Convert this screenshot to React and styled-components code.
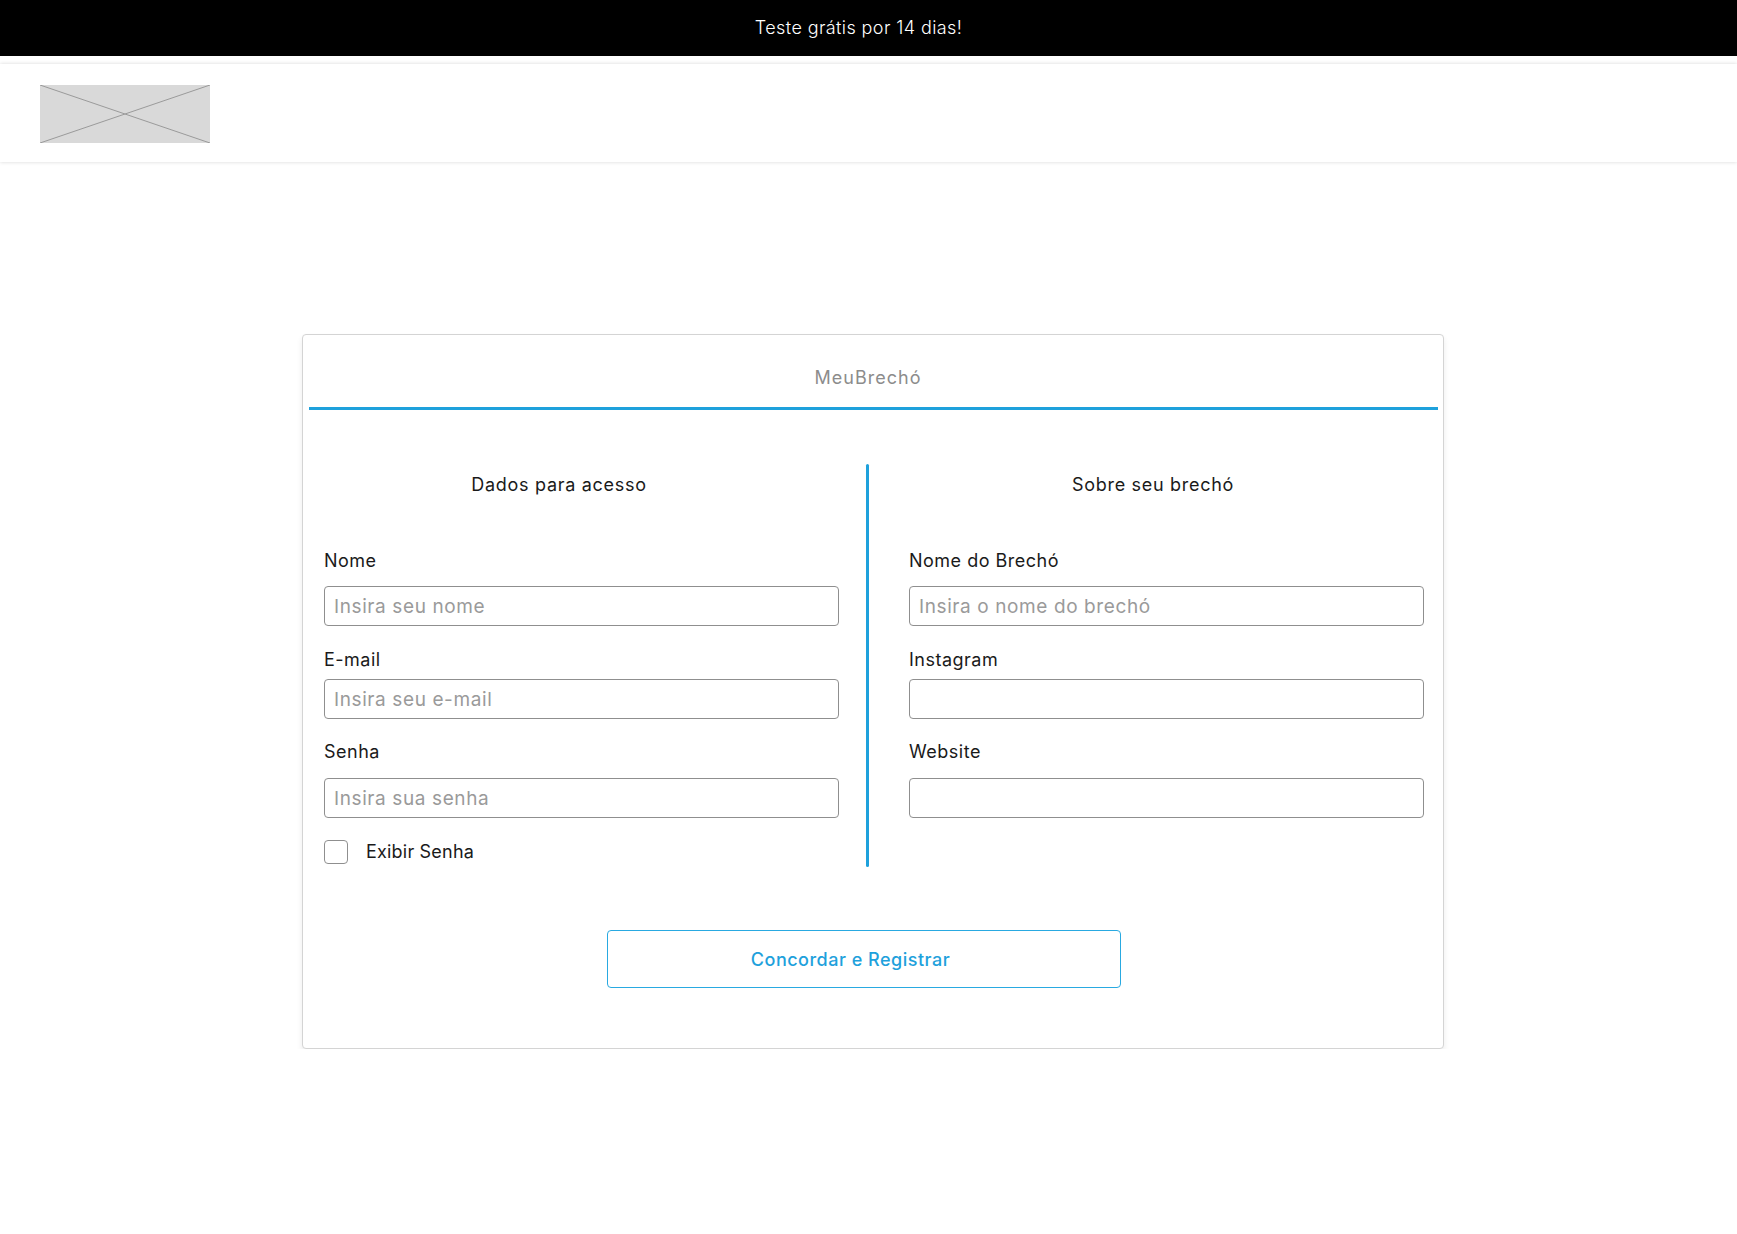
import styled, { createGlobalStyle } from "styled-components"

const GlobalStyle = createGlobalStyle`
  * { box-sizing: border-box; }
  body {
    margin: 0;
    background: #fff;
    font-family: Inter, "Open Sans", sans-serif;
    color: #1a1a1a;
  }
`;

const Field = ({ label, placeholder, type = "text", top, gap }) => (
  <FieldBox $top={top}>
    <Label $gap={gap}>{label}</Label>
    <Input type={type} placeholder={placeholder} />
  </FieldBox>
);

const App = () => {
  return (
    <>
      <GlobalStyle />
      <PromoBar>Teste grátis por 14 dias!</PromoBar>

      <Header>
        <LogoBox>
          <svg width="170" height="58" viewBox="0 0 170 58">
            <rect x="0" y="0" width="170" height="58" fill="#d9d9d9" />
            <line x1="0" y1="0" x2="170" y2="58" stroke="#9a9a9a" strokeWidth="1" />
            <line x1="0" y1="58" x2="170" y2="0" stroke="#9a9a9a" strokeWidth="1" />
          </svg>
        </LogoBox>
      </Header>

      <Main>
        <Card>
          <CardTitle>MeuBrechó</CardTitle>
          <TitleRule />

          <CardBody>
            <Column>
              <SectionTitle $shift={45}>Dados para acesso</SectionTitle>
              <Field label="Nome" placeholder="Insira seu nome" top={52} gap={13} />
              <Field label="E-mail" placeholder="Insira seu e-mail" top={22} gap={7} />
              <Field label="Senha" placeholder="Insira sua senha" type="password" top={21} gap={14} />
              <CheckRow>
                <CheckBox type="checkbox" />
                <span>Exibir Senha</span>
              </CheckRow>
            </Column>

            <Divider />

            <Column>
              <SectionTitle $shift={27}>Sobre seu brechó</SectionTitle>
              <Field label="Nome do Brechó" placeholder="Insira o nome do brechó" top={52} gap={13} />
              <Field label="Instagram" top={22} gap={7} />
              <Field label="Website" top={21} gap={14} />
            </Column>
          </CardBody>

          <Footer>
            <RegisterButton>Concordar e Registrar</RegisterButton>
          </Footer>
        </Card>
      </Main>
    </>
  );
};

export default App;

const PromoBar = styled.div`
  height: 56px;
  background: #000;
  color: #fff;
  display: flex;
  align-items: center;
  justify-content: center;
  font-size: 18px;
  font-weight: 300;
  letter-spacing: 0.4px;
  padding-right: 20px;
  padding-bottom: 2px;
`;

const Header = styled.header`
  margin-top: 8px;
  height: 98px;
  display: flex;
  align-items: center;
  padding-left: 40px;
  background: #fff;
  box-shadow: 0 0 4px rgba(0, 0, 0, 0.16);
`;

const LogoBox = styled.div`
  width: 170px;
  height: 58px;
  margin-top: 2px;
  svg { display: block; }
`;

const Main = styled.main`
  display: flex;
  justify-content: center;
  padding: 172px 0 0 9px;
`;

const Card = styled.section`
  width: 1142px;
  border: 1px solid #d4d4d4;
  border-radius: 4px;
  background: #fff;
  box-shadow: 0 4px 6px rgba(0, 0, 0, 0.08);
  display: flex;
  flex-direction: column;
`;

const CardTitle = styled.h1`
  margin: 0;
  padding-top: 31px;
  text-align: center;
  font-size: 18px;
  line-height: 24px;
  font-weight: 400;
  color: #8c8c8c;
  letter-spacing: 1px;
  padding-right: 10px;
`;

const TitleRule = styled.div`
  height: 3px;
  margin: 17px 5px 0 6px;
  background: #1ea1dc;
`;

const CardBody = styled.div`
  display: flex;
  padding: 54px 19px 0 21px;
`;

const Column = styled.div`
  width: 515px;
  display: flex;
  flex-direction: column;
  padding: 9px 0 3px;
`;

const SectionTitle = styled.h2`
  margin: 0;
  text-align: center;
  font-size: 18px;
  line-height: 24px;
  font-weight: 400;
  letter-spacing: 0.7px;
  color: #1a1a1a;
  padding-right: ${(p) => p.$shift}px;
`;

const Divider = styled.div`
  width: 3px;
  margin: 0 40px 0 27px;
  background: #1ea1dc;
  border-radius: 2px;
`;

const FieldBox = styled.div`
  display: flex;
  flex-direction: column;
  margin-top: ${(p) => p.$top}px;
`;

const Label = styled.label`
  font-size: 18px;
  line-height: 24px;
  letter-spacing: 0.5px;
  color: #1a1a1a;
  margin-bottom: ${(p) => p.$gap}px;
`;

const Input = styled.input`
  height: 40px;
  width: 100%;
  border: 1px solid #8f8f8f;
  border-radius: 4px;
  padding: 0 9px;
  font-family: inherit;
  font-size: 19px;
  letter-spacing: 0.6px;
  color: #111;
  background: #fff;
  outline: none;

  &::placeholder {
    color: #9a9a9a;
  }
`;

const CheckRow = styled.label`
  margin-top: 22px;
  display: flex;
  align-items: center;
  gap: 18px;
  font-size: 18px;
  line-height: 24px;
  letter-spacing: 0.2px;
  color: #1a1a1a;
`;

const CheckBox = styled.input`
  appearance: none;
  margin: 0;
  width: 24px;
  height: 24px;
  border: 1.5px solid #8f8f8f;
  border-radius: 4px;
  background: #fff;
`;

const Footer = styled.div`
  display: flex;
  justify-content: center;
  padding: 63px 18px 60px 0;
`;

const RegisterButton = styled.button`
  width: 514px;
  height: 58px;
  border: 1.5px solid #29a9e1;
  border-radius: 4px;
  background: #fff;
  color: #1ea1dc;
  font-family: inherit;
  font-size: 18px;
  font-weight: 500;
  letter-spacing: 0.5px;
  padding: 0 27px 0 0;
  cursor: pointer;
`;
